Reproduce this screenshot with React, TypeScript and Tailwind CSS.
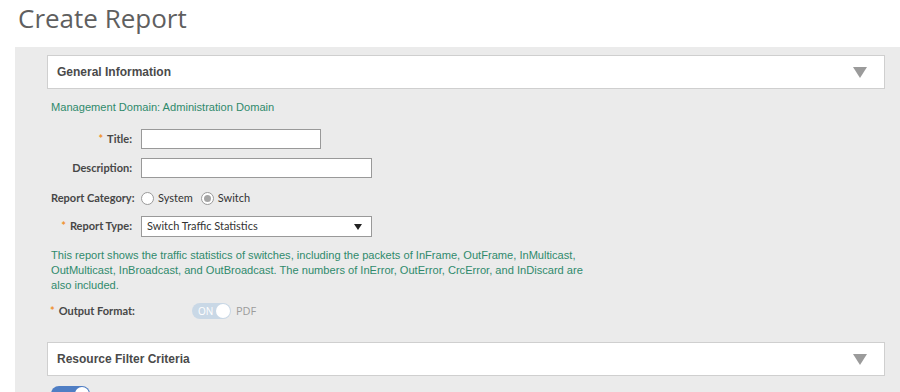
import React from "react";

const labelFont = { fontFamily: '"Open Sans", "DejaVu Sans", sans-serif' };
const lato = { fontFamily: 'Lato, "Open Sans", sans-serif' };
const arial = { fontFamily: '"Liberation Sans", Arial, sans-serif' };

function SectionHeader({ title }: { title: string }) {
  return (
    <div className="flex h-[34px] items-center justify-between border border-[#cfcfcf] bg-white pl-[9px] pr-[17px]">
      <span className="text-[12px] font-bold text-[#4a4a4a]" style={arial}>
        {title}
      </span>
      <svg width="14" height="11" viewBox="0 0 14 11">
        <polygon points="0,0 14,0 7,11" fill="#9b9b9b" />
      </svg>
    </div>
  );
}

function Label({ text, required }: { text: string; required?: boolean }) {
  return (
    <div className="w-[81px] shrink-0 whitespace-nowrap text-right text-[11px] font-bold text-[#474747]" style={lato}>
      {required && <span className="mr-[4px] text-[#f0912b]">*</span>}
      {text}
    </div>
  );
}

function Radio({ checked, label }: { checked?: boolean; label: string }) {
  return (
    <div className="flex items-center gap-[4px]">
      <span className="flex h-[13px] w-[13px] items-center justify-center rounded-full border border-[#9a9a9a] bg-white">
        {checked && <span className="h-[7px] w-[7px] rounded-full bg-[#a5a5a5]" />}
      </span>
      <span className="text-[11px] text-[#333]" style={lato}>
        {label}
      </span>
    </div>
  );
}

export default function App() {
  return (
    <div className="h-[392px] w-[900px] overflow-hidden bg-white">
      <h1 className="h-[47px] pl-[18px] pt-[1px] text-[26px] leading-[34px] text-[#5f5f5f]" style={labelFont}>
        Create Report
      </h1>

      <div className="ml-[15px] bg-[#ebebeb] pl-[32px] pr-[15px] pt-[8px]">
        <SectionHeader title="General Information" />

        <div className="pl-[4px]">
          <p className="mt-[11px] text-[11.1px] leading-[15px] text-[#2f8a6c]" style={arial}>
            Management Domain: Administration Domain
          </p>

          <div className="mt-[14px] flex items-center gap-[9px]">
            <Label text="Title:" required />
            <div className="h-[20px] w-[180px] border border-[#999] bg-white" />
          </div>

          <div className="mt-[9px] flex items-center gap-[9px]">
            <Label text="Description:" />
            <div className="h-[20px] w-[231px] border border-[#999] bg-white" />
          </div>

          <div className="mt-[10px] flex h-[20px] items-center gap-[9px]">
            <Label text="Report Category:" />
            <div className="flex items-center gap-[8px]">
              <Radio label="System" />
              <Radio label="Switch" checked />
            </div>
          </div>

          <div className="mt-[8px] flex items-center gap-[9px]">
            <Label text="Report Type:" required />
            <div className="flex h-[21px] w-[231px] items-center justify-between border border-[#999] bg-white pl-[5px] pr-[9px]">
              <span className="text-[11px] text-[#333]" style={lato}>
                Switch Traffic Statistics
              </span>
              <svg width="8" height="6" viewBox="0 0 8 6">
                <polygon points="0,0 8,0 4,6" fill="#222" />
              </svg>
            </div>
          </div>

          <p className="mt-[11px] w-[540px] text-[11.1px] leading-[15px] text-[#2f8a6c]" style={arial}>
            This report shows the traffic statistics of switches, including the packets of InFrame, OutFrame, InMulticast,
            OutMulticast, InBroadcast, and OutBroadcast. The numbers of InError, OutError, CrcError, and InDiscard are
            also included.
          </p>

          <div className="mt-[10px] flex h-[16px] items-center">
            <div className="w-[142px] -ml-[1px] text-[11px] font-bold text-[#474747]" style={lato}>
              <span className="mr-[4px] text-[#f0912b]">*</span>
              Output Format:
            </div>
            <div className="flex h-[16px] w-[39px] items-center justify-between rounded-full bg-[#c9d8e6] pl-[6px] pr-[1px]">
              <span className="text-[10px] text-white" style={labelFont}>
                ON
              </span>
              <span className="h-[14px] w-[14px] rounded-full bg-white" />
            </div>
            <span className="ml-[5px] text-[11px] text-[#9c9c9c]" style={labelFont}>
              PDF
            </span>
          </div>
        </div>

        <div className="mt-[23px]">
          <SectionHeader title="Resource Filter Criteria" />
        </div>

        <div className="mt-[10px] pl-[4px]">
          <div className="flex h-[16px] w-[39px] items-center justify-end rounded-full bg-[#4f7ec4] pr-[1px]">
            <span className="h-[14px] w-[14px] rounded-full bg-white" />
          </div>
        </div>
      </div>
    </div>
  );
}
